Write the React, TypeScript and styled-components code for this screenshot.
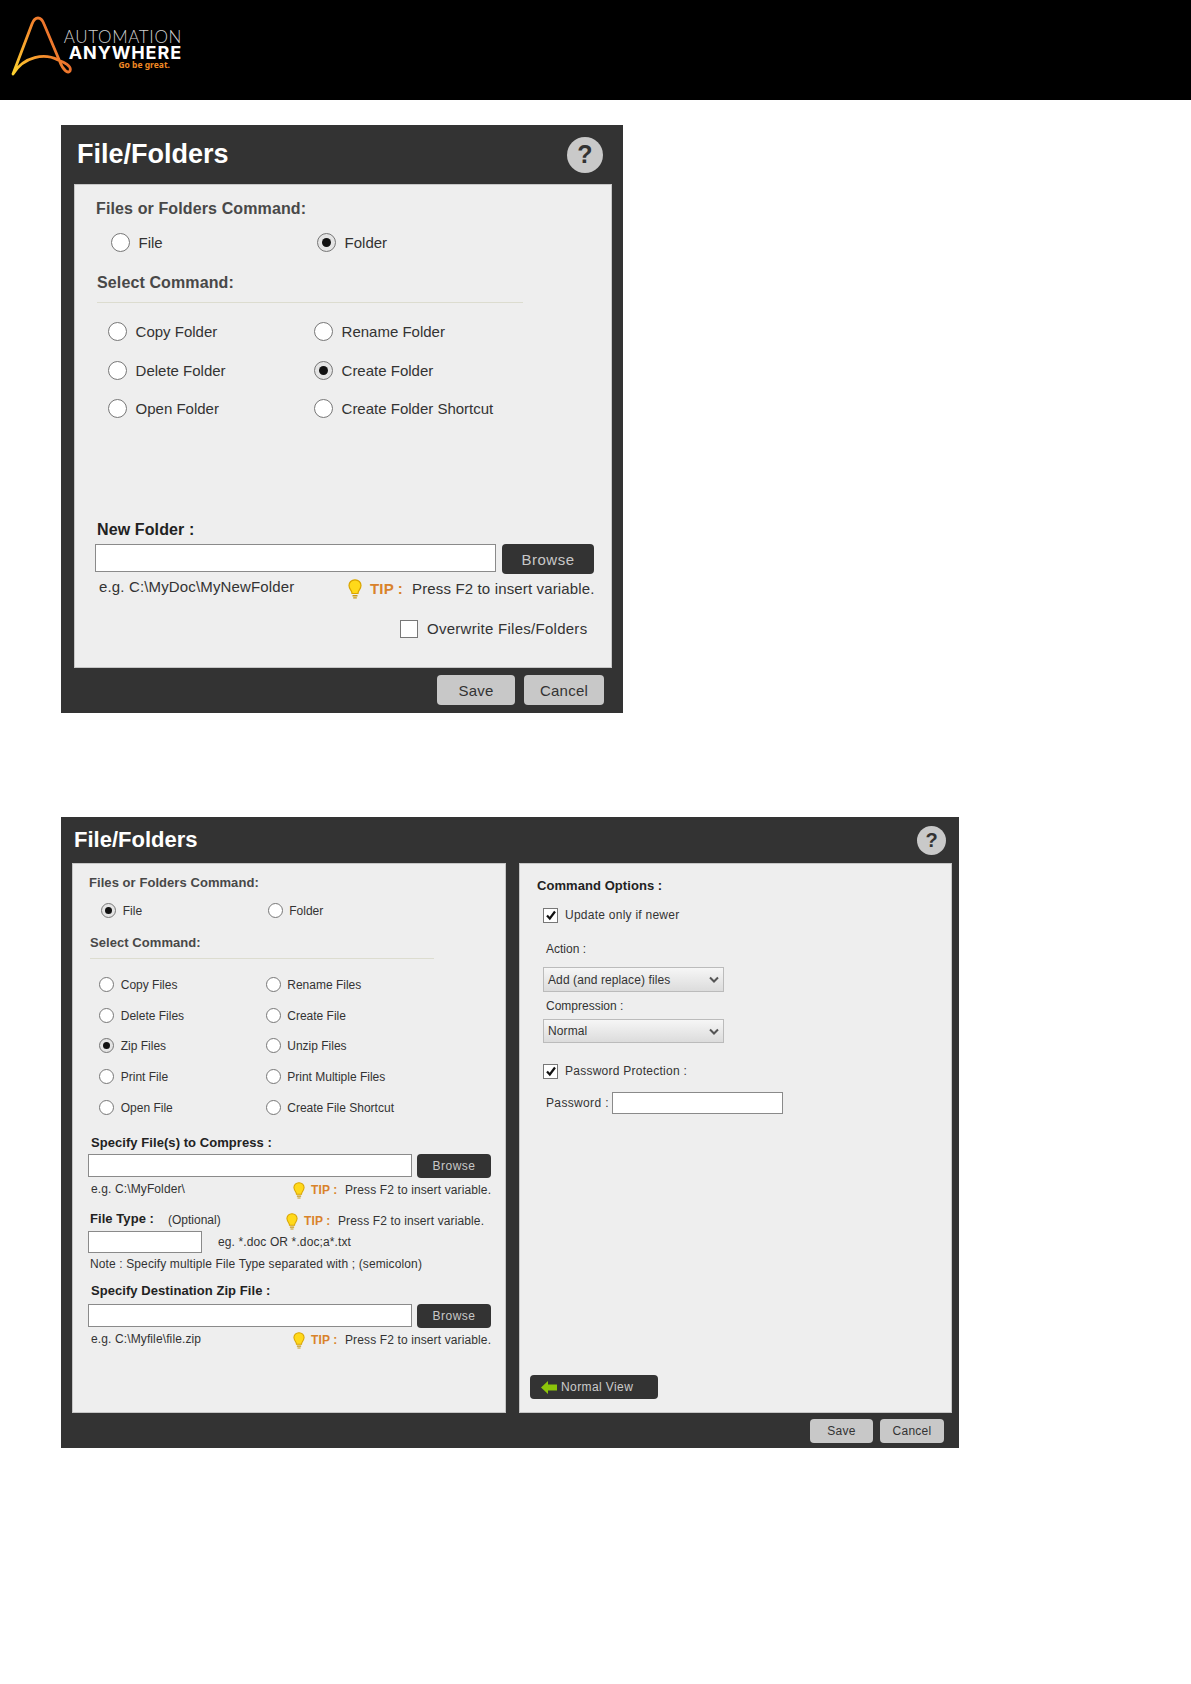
import React from 'react';
import styled, {createGlobalStyle, css} from 'styled-components';

const GlobalStyle = createGlobalStyle`
  html, body {
    margin: 0;
    padding: 0;
    background: white;
  }
  body {
    font-family: "Liberation Sans", Arial, sans-serif;
    color: #333;
  }
`;

const Header = styled.header`
  display: flex;
  align-items: flex-start;
  height: 100px;
  background: #000;
`;

const LogoMark = styled.svg`
  width: 72px;
  height: 100px;
  flex: none;
`;

const LogoText = styled.div`
  display: flex;
  flex-direction: column;
  align-items: flex-end;
  width: 118px;
  margin-left: -8px;
  padding-top: 30px;
`;

const LogoThin = styled.div`
  font-family: Lato, sans-serif;
  font-weight: 300;
  font-size: 17px;
  line-height: 13px;
  letter-spacing: 0.65px;
  color: #cfcfcf;
`;

const LogoBold = styled.div`
  margin-top: 1px;
  font-family: Inter, sans-serif;
  font-weight: 700;
  font-size: 18px;
  line-height: 17px;
  letter-spacing: 0.9px;
  color: #fff;
`;

const LogoTag = styled.div`
  font-family: "Noto Sans", sans-serif;
  font-weight: 700;
  font-size: 8.500px;
  line-height: 8px;
  color: #f08a24;
  margin-right: 12px;
`;

const bigVars = css`
  --title: 27px;
  --label: 16px;
  --label-track: 0.12px;
  --text: 15px;
  --line: 20px;
  --radio: 19px;
  --dot: 9px;
  --col: 206px;
  --button-h: 30px;
  --browse-w: 92px;
  --bulb-w: 14px;
  --bulb-h: 20px;
  --tip-gap: 8px;
  --tip-w: 42px;
  --hint-track: 0.15px;
`;

const smallVars = css`
  --title: 22px;
  --label: 13px;
  --label-track: 0.06px;
  --text: 12px;
  --line: 16px;
  --radio: 15px;
  --dot: 7px;
  --col: 166.500px;
  --button-h: 24px;
  --browse-w: 74px;
  --bulb-w: 12px;
  --bulb-h: 17px;
  --tip-gap: 6px;
  --tip-w: 34px;
  --hint-track: 0.12px;
`;

const Dialog = styled.section<{$big?: boolean; $top: number; $width: number}>`
  ${p => (p.$big ? bigVars : smallVars)}
  width: ${p => p.$width}px;
  margin: ${p => p.$top}px 0 0 61px;
  background: #333;
`;

const TitleBar = styled.div<{$height: number; $left: number; $right: number}>`
  display: flex;
  align-items: center;
  justify-content: space-between;
  height: ${p => p.$height}px;
  padding: 0 ${p => p.$right}px 0 ${p => p.$left}px;
`;

const Title = styled.h1`
  margin: 0 0 1px;
  font-size: var(--title);
  font-weight: 700;
  color: #fff;
`;

const Help = styled.div<{$size: number}>`
  display: flex;
  align-items: center;
  justify-content: center;
  width: ${p => p.$size}px;
  height: ${p => p.$size}px;
  border-radius: 50%;
  background: #c9c9c9;
  color: #333;
  font-weight: 700;
  font-size: ${p => Math.round(p.$size * 0.7)}px;
`;

const Panels = styled.div<{$left: number; $gap?: number}>`
  display: flex;
  gap: ${p => p.$gap ?? 0}px;
  padding-left: ${p => p.$left}px;
`;

const Panel = styled.div<{$width: number; $height: number; $top: number; $left: number}>`
  display: flex;
  flex-direction: column;
  box-sizing: border-box;
  width: ${p => p.$width}px;
  height: ${p => p.$height}px;
  padding: ${p => p.$top}px 0 0 ${p => p.$left}px;
  background: #eee;
  box-shadow: inset 0 0 0 1px #c6c6c6;
  font-size: var(--text);
  line-height: var(--line);
`;

const SectionLabel = styled.div<{$top?: number; $indent?: number; $dark?: boolean}>`
  margin: ${p => p.$top ?? 0}px 0 0 ${p => p.$indent ?? 0}px;
  font-size: var(--label);
  font-weight: 700;
  line-height: var(--line);
  letter-spacing: var(--label-track);
  color: ${p => (p.$dark ? '#222' : '#484848')};
`;

const Divider = styled.div<{$top: number; $width: number; $indent: number}>`
  width: ${p => p.$width}px;
  height: 1px;
  margin: ${p => p.$top}px 0 0 ${p => p.$indent}px;
  background: #dcdccf;
`;

const RadioGrid = styled.div<{$top: number; $indent: number; $rowGap?: number}>`
  display: grid;
  grid-template-columns: var(--col) var(--col);
  row-gap: ${p => p.$rowGap ?? 0}px;
  margin: ${p => p.$top}px 0 0 ${p => p.$indent}px;
`;

const RadioItem = styled.div`
  display: flex;
  align-items: center;
  gap: calc(var(--radio) * 0.45);
  height: var(--line);
  color: #333;
`;

const RadioCircle = styled.span<{$on?: boolean}>`
  display: flex;
  align-items: center;
  justify-content: center;
  flex: none;
  box-sizing: border-box;
  width: var(--radio);
  height: var(--radio);
  margin-top: -1px;
  border: 1.500px solid #777;
  border-radius: 50%;
  background: ${p => (p.$on ? '#e4e4e4' : '#fff')};

  &::after {
    content: '';
    display: ${p => (p.$on ? 'block' : 'none')};
    width: var(--dot);
    height: var(--dot);
    border-radius: 50%;
    background: #111;
  }
`;

const FieldRow = styled.div<{$top: number; $gap: number}>`
  display: flex;
  align-items: flex-start;
  gap: ${p => p.$gap}px;
  margin: ${p => p.$top}px 0 0 -1px;
`;

const TextBox = styled.input<{$width: number; $height: number}>`
  display: block;
  flex: none;
  box-sizing: border-box;
  width: ${p => p.$width}px;
  height: ${p => p.$height}px;
  margin: 0;
  padding: 0;
  border: 1.500px solid #8a8a8a;
  border-radius: 0;
  outline: none;
  background: #fff;
`;

const Browse = styled.div<{$height: number}>`
  display: flex;
  align-items: center;
  justify-content: center;
  width: var(--browse-w);
  height: ${p => p.$height}px;
  padding-top: 1px;
  box-sizing: border-box;
  border-radius: 4px;
  background: #333;
  color: #c8c8c8;
  letter-spacing: 0.5px;
`;

const HintRow = styled.div<{$top: number}>`
  display: flex;
  align-items: flex-start;
  margin-top: ${p => p.$top}px;
  letter-spacing: var(--hint-track);
`;

const Example = styled.div<{$width: number; $indent: number}>`
  flex: none;
  box-sizing: border-box;
  width: ${p => p.$width}px;
  padding-left: ${p => p.$indent}px;
`;

const Tip = styled.div<{$drop?: number}>`
  display: flex;
  align-items: center;
  white-space: nowrap;
  margin-top: ${p => p.$drop ?? 2}px;
  letter-spacing: var(--hint-track);
`;

const Bulb = styled.svg`
  flex: none;
  width: var(--bulb-w);
  height: var(--bulb-h);
  margin-right: var(--tip-gap);
`;

const TipLabel = styled.span`
  flex: none;
  width: var(--tip-w);
  color: #d9822b;
  font-weight: 700;
`;

const OverwriteRow = styled.div`
  display: flex;
  align-items: center;
  margin: 20px 0 0 304px;
  gap: 9px;
  letter-spacing: 0.27px;
`;

const CheckBox = styled.span<{$size: number}>`
  display: flex;
  align-items: center;
  justify-content: center;
  flex: none;
  box-sizing: border-box;
  width: ${p => p.$size}px;
  height: ${p => p.$size}px;
  border: 1.500px solid #777;
  background: #fff;
`;

const Footer = styled.div<{$height: number; $top: number; $right: number; $gap: number}>`
  display: flex;
  justify-content: flex-end;
  gap: ${p => p.$gap}px;
  box-sizing: border-box;
  height: ${p => p.$height}px;
  padding: ${p => p.$top}px ${p => p.$right}px 0 0;
`;

const FooterButton = styled.div<{$width: number}>`
  display: flex;
  align-items: center;
  justify-content: center;
  width: ${p => p.$width}px;
  height: var(--button-h);
  border-radius: 4px;
  background: #c8c8c8;
  color: #333;
  font-size: var(--text);
  letter-spacing: 0.25px;
`;

const FileTypeRow = styled.div`
  display: flex;
  align-items: flex-start;
  height: 20px;
  margin: 12px 0 0 1px;
`;

const Optional = styled.span`
  flex: none;
  width: 118px;
  margin-top: 1px;
`;

const FileTypeLabel = styled(SectionLabel)`
  flex: none;
  width: 78px;
`;

const FileTypeInput = styled.div`
  display: flex;
  align-items: center;
  gap: 16px;
  margin-left: -1px;
  letter-spacing: var(--hint-track);
`;

const Note = styled.div`
  margin: 3px 0 0 1px;
  letter-spacing: var(--hint-track);
`;

const OptionsHeading = styled(SectionLabel)`
  color: #222;
`;

const CheckRow = styled.div<{$top: number}>`
  display: flex;
  align-items: center;
  gap: 7px;
  margin: ${p => p.$top}px 0 0 6px;
  letter-spacing: 0.25px;
`;

const OptionLabel = styled.div<{$top: number}>`
  margin: ${p => p.$top}px 0 0 9px;
`;

const SelectBox = styled.div<{$top: number; $height: number}>`
  display: flex;
  align-items: center;
  justify-content: space-between;
  box-sizing: border-box;
  width: 181px;
  height: ${p => p.$height}px;
  margin: ${p => p.$top}px 0 0 6px;
  padding: 0 4px 0 4px;
  border: 1px solid #bbb;
  background: linear-gradient(#f6f6f6, #dcdcdc);
  letter-spacing: 0.1px;
`;

const PasswordRow = styled.div`
  display: flex;
  align-items: center;
  gap: 3px;
  margin: 13px 0 0 9px;
  letter-spacing: 0.35px;
`;

const NormalView = styled.div`
  display: flex;
  align-items: center;
  gap: 4px;
  box-sizing: border-box;
  width: 128px;
  height: 24px;
  margin: auto 0 14px -7px;
  padding-left: 11px;
  border-radius: 4px;
  background: #333;
  color: #ccc;
  letter-spacing: 0.4px;
`;

type RadioDef = [label: string, on?: boolean];

function Radios({items, top, indent, rowGap}: {items: RadioDef[]; top: number; indent: number; rowGap?: number}) {
    return (
        <RadioGrid $top={top} $indent={indent} $rowGap={rowGap}>
            {items.map(([label, on]) => (
                <RadioItem key={label}>
                    <RadioCircle $on={on}/>
                    {label}
                </RadioItem>
            ))}
        </RadioGrid>
    );
}

function BulbIcon() {
    return (
        <Bulb viewBox="0 0 14 20">
            <path d="M7 .8C3.400 .8 1 3.400 1 6.600c0 2.600 1.600 4 2.400 5.600.4.8.6 1.600.6 2.300h6c0-.7.2-1.500.6-2.300C11.400 10.600 13 9.200 13 6.600 13 3.400 10.600.8 7 .8z" fill="#ffd91a" stroke="#d9a400" strokeWidth="1.200"/>
            <path d="M4.500 16h5v1.400h-5zM5.200 18.200h3.600v1.200H5.200z" fill="#c99a10"/>
        </Bulb>
    );
}

function TipText({drop}: {drop?: number}) {
    return (
        <Tip $drop={drop}>
            <BulbIcon/>
            <TipLabel>TIP :</TipLabel>
            Press F2 to insert variable.
        </Tip>
    );
}

function Tick({size}: {size: number}) {
    return (
        <svg width={size} height={size} viewBox="0 0 12 12">
            <path d="M2 6.500l2.800 3L10 2.500" fill="none" stroke="#111" strokeWidth="2.200"/>
        </svg>
    );
}

function Chevron() {
    return (
        <svg width="10" height="7" viewBox="0 0 10 7">
            <path d="M1 1.500l4 4 4-4" fill="none" stroke="#555" strokeWidth="2"/>
        </svg>
    );
}

function App() {
    return (
        <>
            <GlobalStyle/>
            <Header>
                <LogoMark viewBox="0 0 72 100">
                    <defs>
                        <linearGradient id="logoGrad" x1="0" y1="1" x2="1" y2="0.5">
                            <stop offset="0" stopColor="#fdd22f"/>
                            <stop offset="0.5" stopColor="#f7942d"/>
                            <stop offset="1" stopColor="#e8602c"/>
                        </linearGradient>
                    </defs>
                    <path
                        d="M13 74L32 24C35 16 41 16 44 24L60 62C63 70 68 74 70 71C72 66 64 62 58 60C45 53 24 56 13 74Z"
                        fill="none"
                        stroke="url(#logoGrad)"
                        strokeWidth="2.800"
                        strokeLinejoin="round"
                    />
                </LogoMark>
                <LogoText>
                    <LogoThin>AUTOMATION</LogoThin>
                    <LogoBold>ANYWHERE</LogoBold>
                    <LogoTag>Go be great.</LogoTag>
                </LogoText>
            </Header>

            <Dialog $big $top={25} $width={562}>
                <TitleBar $height={59} $left={16} $right={20}>
                    <Title>File/Folders</Title>
                    <Help $size={36}>?</Help>
                </TitleBar>
                <Panels $left={13}>
                    <Panel $width={538} $height={484} $top={15} $left={22}>
                        <SectionLabel>Files or Folders Command:</SectionLabel>
                        <Radios top={14} indent={15} items={[['File'], ['Folder', true]]}/>
                        <SectionLabel $top={20} $indent={1}>Select Command:</SectionLabel>
                        <Divider $top={9} $width={426} $indent={1}/>
                        <Radios
                            top={19}
                            indent={12}
                            rowGap={18.500}
                            items={[
                                ['Copy Folder'],
                                ['Rename Folder'],
                                ['Delete Folder'],
                                ['Create Folder', true],
                                ['Open Folder'],
                                ['Create Folder Shortcut'],
                            ]}
                        />
                        <SectionLabel $top={101} $indent={1} $dark>New Folder :</SectionLabel>
                        <FieldRow $top={4} $gap={6}>
                            <TextBox readOnly $width={401} $height={28}/>
                            <Browse $height={30}>Browse</Browse>
                        </FieldRow>
                        <HintRow $top={3}>
                            <Example $width={252} $indent={3}>e.g. C:\MyDoc\MyNewFolder</Example>
                            <TipText/>
                        </HintRow>
                        <OverwriteRow>
                            <CheckBox $size={18}/>
                            Overwrite Files/Folders
                        </OverwriteRow>
                    </Panel>
                </Panels>
                <Footer $height={45} $top={7} $right={19} $gap={9}>
                    <FooterButton $width={78}>Save</FooterButton>
                    <FooterButton $width={80}>Cancel</FooterButton>
                </Footer>
            </Dialog>

            <Dialog $top={104} $width={898}>
                <TitleBar $height={46} $left={13} $right={13}>
                    <Title>File/Folders</Title>
                    <Help $size={29}>?</Help>
                </TitleBar>
                <Panels $left={11} $gap={13}>
                    <Panel $width={434} $height={550} $top={12} $left={17}>
                        <SectionLabel>Files or Folders Command:</SectionLabel>
                        <Radios top={12} indent={12} items={[['File', true], ['Folder']]}/>
                        <SectionLabel $top={16} $indent={1}>Select Command:</SectionLabel>
                        <Divider $top={7} $width={344} $indent={1}/>
                        <Radios
                            top={18}
                            indent={10}
                            rowGap={14.700}
                            items={[
                                ['Copy Files'],
                                ['Rename Files'],
                                ['Delete Files'],
                                ['Create File'],
                                ['Zip Files', true],
                                ['Unzip Files'],
                                ['Print File'],
                                ['Print Multiple Files'],
                                ['Open File'],
                                ['Create File Shortcut'],
                            ]}
                        />
                        <SectionLabel $top={19.500} $indent={2} $dark>Specify File(s) to Compress :</SectionLabel>
                        <FieldRow $top={2.500} $gap={5}>
                            <TextBox readOnly $width={324} $height={23}/>
                            <Browse $height={24}>Browse</Browse>
                        </FieldRow>
                        <HintRow $top={3}>
                            <Example $width={204} $indent={2}>e.g. C:\MyFolder\</Example>
                            <TipText drop={1}/>
                        </HintRow>
                        <FileTypeRow>
                            <FileTypeLabel $dark>File Type :</FileTypeLabel>
                            <Optional>(Optional)</Optional>
                            <TipText drop={2}/>
                        </FileTypeRow>
                        <FileTypeInput>
                            <TextBox readOnly $width={114} $height={22}/>
                            eg. *.doc OR *.doc;a*.txt
                        </FileTypeInput>
                        <Note>Note : Specify multiple File Type separated with ; (semicolon)</Note>
                        <SectionLabel $top={11} $indent={2} $dark>Specify Destination Zip File :</SectionLabel>
                        <FieldRow $top={5} $gap={5}>
                            <TextBox readOnly $width={324} $height={23}/>
                            <Browse $height={24}>Browse</Browse>
                        </FieldRow>
                        <HintRow $top={3}>
                            <Example $width={204} $indent={2}>e.g. C:\Myfile\file.zip</Example>
                            <TipText drop={1}/>
                        </HintRow>
                    </Panel>
                    <Panel $width={433} $height={550} $top={15} $left={18}>
                        <OptionsHeading>Command Options :</OptionsHeading>
                        <CheckRow $top={13}>
                            <CheckBox $size={15}><Tick size={12}/></CheckBox>
                            Update only if newer
                        </CheckRow>
                        <OptionLabel $top={18}>Action :</OptionLabel>
                        <SelectBox $top={10} $height={25}>Add (and replace) files<Chevron/></SelectBox>
                        <OptionLabel $top={6}>Compression :</OptionLabel>
                        <SelectBox $top={5} $height={24}>Normal<Chevron/></SelectBox>
                        <CheckRow $top={20}>
                            <CheckBox $size={15}><Tick size={12}/></CheckBox>
                            Password Protection :
                        </CheckRow>
                        <PasswordRow>
                            Password :
                            <TextBox readOnly $width={171} $height={22}/>
                        </PasswordRow>
                        <NormalView>
                            <svg width="16" height="13" viewBox="0 0 16 13">
                                <path d="M0 6.500L7 0v3.500h9v6H7V13z" fill="#8cc40a"/>
                            </svg>
                            Normal View
                        </NormalView>
                    </Panel>
                </Panels>
                <Footer $height={35} $top={6} $right={15} $gap={7}>
                    <FooterButton $width={63}>Save</FooterButton>
                    <FooterButton $width={64}>Cancel</FooterButton>
                </Footer>
            </Dialog>
        </>
    );
}

export default App;
